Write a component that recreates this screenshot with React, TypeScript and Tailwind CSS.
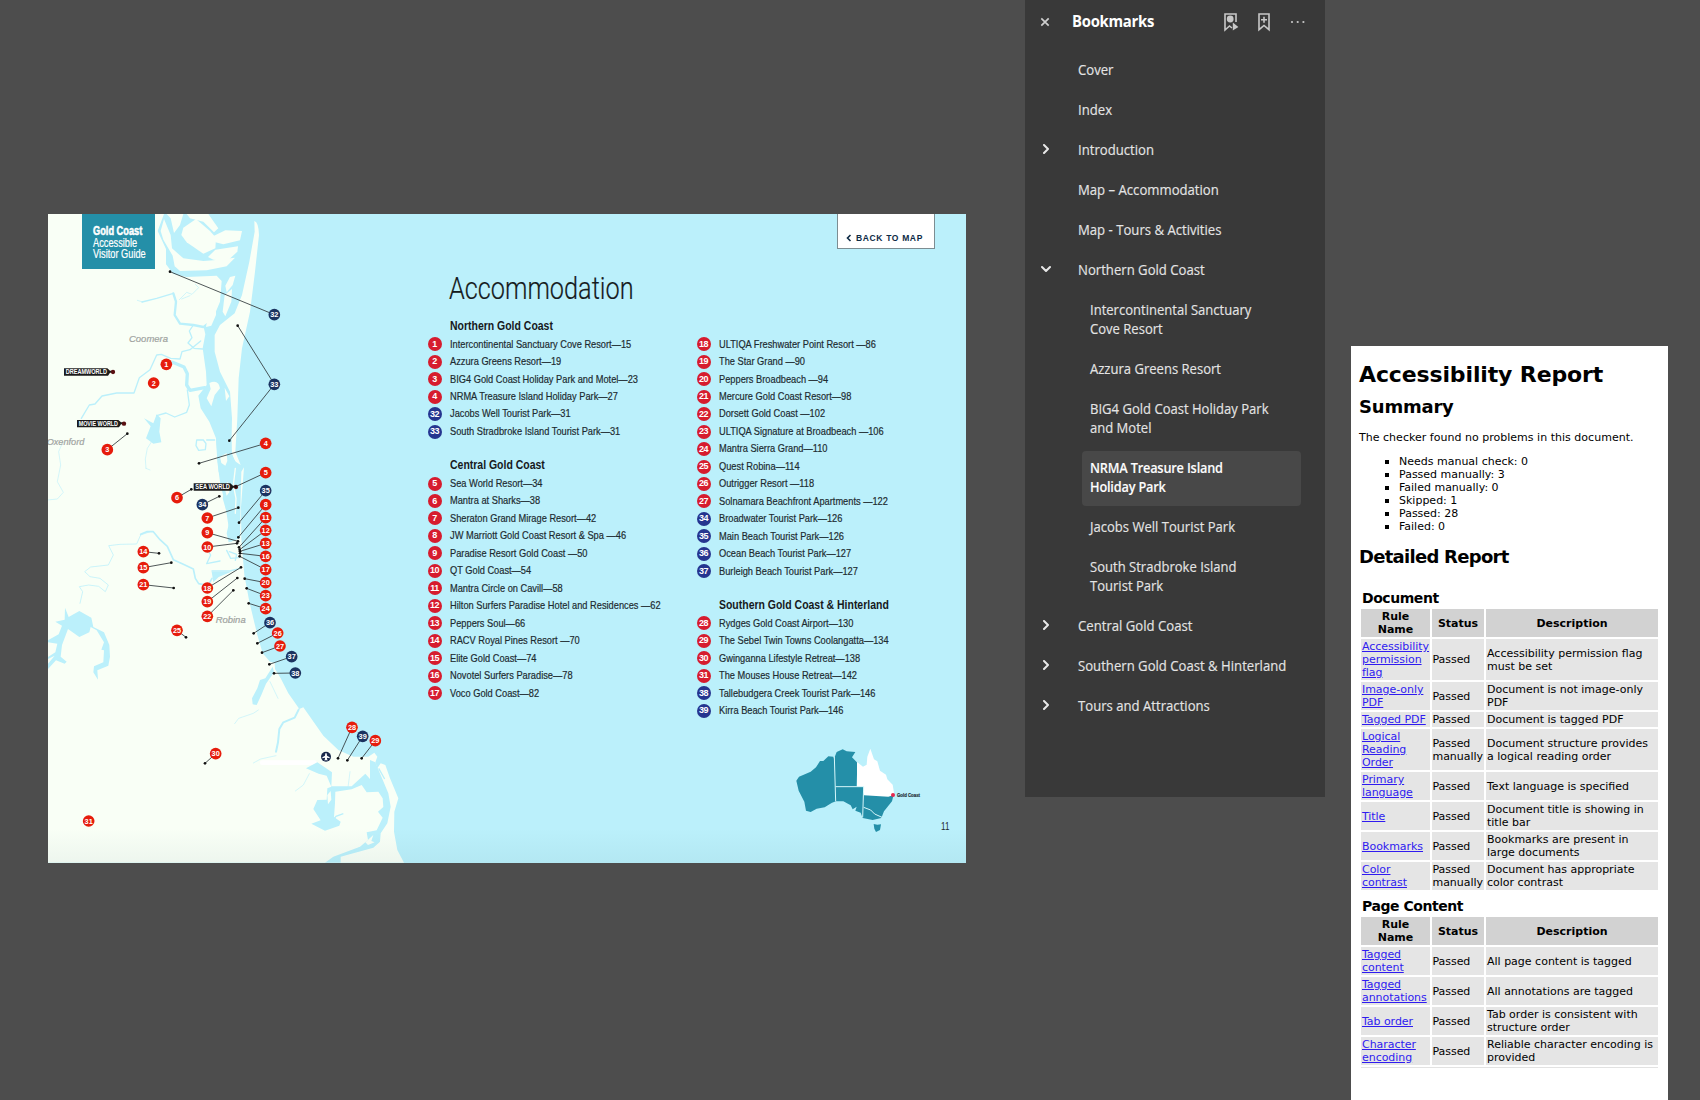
import React from "react";

type Tone = "red" | "navy";
type Item = [number, string, Tone?];

const NORTH: Item[] = [
  [1, "Intercontinental Sanctuary Cove Resort—15"],
  [2, "Azzura Greens Resort—19"],
  [3, "BIG4 Gold Coast Holiday Park and Motel—23"],
  [4, "NRMA Treasure Island Holiday Park—27"],
  [32, "Jacobs Well Tourist Park—31", "navy"],
  [33, "South Stradbroke Island Tourist Park—31", "navy"],
];
const CENTRAL_A: Item[] = [
  [5, "Sea World Resort—34"],
  [6, "Mantra at Sharks—38"],
  [7, "Sheraton Grand Mirage Resort—42"],
  [8, "JW Marriott Gold Coast Resort & Spa —46"],
  [9, "Paradise Resort Gold Coast —50"],
  [10, "QT Gold Coast—54"],
  [11, "Mantra Circle on Cavill—58"],
  [12, "Hilton Surfers Paradise Hotel and Residences —62"],
  [13, "Peppers Soul—66"],
  [14, "RACV Royal Pines Resort —70"],
  [15, "Elite Gold Coast—74"],
  [16, "Novotel Surfers Paradise—78"],
  [17, "Voco Gold Coast—82"],
];
const CENTRAL_B: Item[] = [
  [18, "ULTIQA Freshwater Point Resort —86"],
  [19, "The Star Grand —90"],
  [20, "Peppers Broadbeach —94"],
  [21, "Mercure Gold Coast Resort—98"],
  [22, "Dorsett Gold Coast —102"],
  [23, "ULTIQA Signature at Broadbeach —106"],
  [24, "Mantra Sierra Grand—110"],
  [25, "Quest Robina—114"],
  [26, "Outrigger Resort —118"],
  [27, "Solnamara Beachfront Apartments —122"],
  [34, "Broadwater Tourist Park—126", "navy"],
  [35, "Main Beach Tourist Park—126", "navy"],
  [36, "Ocean Beach Tourist Park—127", "navy"],
  [37, "Burleigh Beach Tourist Park—127", "navy"],
];
const SOUTH: Item[] = [
  [28, "Rydges Gold Coast Airport—130"],
  [29, "The Sebel Twin Towns Coolangatta—134"],
  [30, "Gwinganna Lifestyle Retreat—138"],
  [31, "The Mouses House Retreat—142"],
  [38, "Tallebudgera Creek Tourist Park—146", "navy"],
  [39, "Kirra Beach Tourist Park—146", "navy"],
];

/* label, pin x, pin y, tone, then the leader's end points */
type Pin = [number, number, number, Tone, ...number[]];
const PINS: Pin[] = [
  [32, 703, 329, "navy", 390, 200],
  [33, 703, 538, "navy", 593, 362, 568, 707],
  [1, 379, 478, "red"],
  [2, 341, 534, "red"],
  [3, 202, 734, "red", 262, 686],
  [4, 677, 715, "red", 477, 775],
  [5, 677, 803, "red", 587, 845],
  [35, 677, 857, "navy", 597, 953],
  [6, 411, 878, "red", 454, 853],
  [34, 487, 899, "navy", 538, 874],
  [7, 502, 939, "red", 595, 908],
  [8, 677, 899, "red", 595, 997],
  [9, 502, 983, "red", 594, 1009],
  [10, 502, 1026, "red", 591, 1015],
  [11, 677, 938, "red", 597, 1027],
  [12, 677, 976, "red", 599, 1034],
  [13, 677, 1015, "red", 600, 1039],
  [16, 677, 1054, "red", 600, 1045],
  [17, 677, 1094, "red", 599, 1054],
  [14, 310, 1040, "red", 357, 1045],
  [15, 310, 1088, "red", 394, 1073],
  [21, 310, 1139, "red", 401, 1149],
  [18, 502, 1149, "red", 603, 1087],
  [19, 502, 1190, "red", 592, 1119],
  [22, 502, 1234, "red", 580, 1156],
  [20, 677, 1133, "red", 614, 1121],
  [23, 677, 1172, "red", 620, 1150],
  [24, 677, 1211, "red", 626, 1195],
  [36, 690, 1253, "navy", 641, 1285],
  [26, 713, 1284, "red", 652, 1315],
  [27, 720, 1323, "red", 666, 1343],
  [37, 755, 1355, "navy", 688, 1378],
  [38, 766, 1404, "navy", 702, 1405],
  [25, 411, 1276, "red", 438, 1297],
  [28, 936, 1567, "red", 894, 1660],
  [39, 968, 1594, "navy", 922, 1666],
  [29, 1006, 1607, "red", 965, 1660],
  [30, 527, 1646, "red", 495, 1675],
  [31, 146, 1848, "red"],
];

const WATER = "#bbf0fb";
const LAND = "#f9fff6";

function Coast() {
  return (
    <g>
      {/* mainland */}
      <path
        fill={LAND}
        d="M22 27H372L353 78 378 132 378 178 400 207 440 216 530 212 545 228 540 290 520 338 490 362 496 388 488 430 498 500 500 540 475 572 482 610 508 650 528 700 532 770 540 830 556 900 565 960 572 1010 600 1000 602 880 604 800 612 787 603 905 604 1000 613 1110 628 1190 652 1290 668 1345 690 1370 704 1374 705 1392 722 1420 745 1465 778 1512 790 1507 850 1592 895 1635 940 1655 985 1655 1003 1643 1012 1655 1006 1672 1012 1690 1022 1675 1036 1680 1050 1720 1075 1780 1063 1820 1062 1880 1072 1935 1092 1973H22Z"
      />
      {/* delta islands */}
      <path fill={LAND} d="M380 27H430L420 60 402 84 392 40Z" />
      <path fill={LAND} d="M372 42L392 90 396 130 430 160 490 168 520 166 585 158 560 184 500 196 420 198 404 184 398 152 370 104 362 78Z" />
      <path fill={LAND} d="M430 68L468 42 510 78 528 98 526 130 490 146 440 112 424 90Z" />
      <path fill={LAND} d="M440 27H505L535 70 522 82 490 50 450 40Z" />
      <path fill={LAND} d="M522 92L556 76 606 78 600 106 550 118 526 112Z" />
      <path fill={LAND} d="M504 156L526 134 594 124 592 140 562 168 520 164Z" />
      <path fill={LAND} d="M556 242L570 216 586 212 578 240 560 262Z" />
      <path fill={LAND} d="M548 320L554 270 576 252 574 290 556 334Z" />
      <path fill={LAND} d="M498 366L504 330 528 304 528 330 514 362Z" />
      {/* South Stradbroke Island */}
      <path fill={LAND} d="M643 48Q656 52 657 90L645 200 630 320 606 430 596 520 592 640 586 740 602 780 584 768 574 740 576 640 570 560 540 500 524 440 524 390 540 360 584 325 606 270 628 170 644 80Z" />
      <path fill={LAND} d="M508 534Q536 522 540 550L524 570 514 604 500 580 512 552ZM554 548L568 574 558 588Z" />
      {/* the Spit */}
      <path fill={WATER} d="M528 700H574L576 750 590 776 604 782 584 800 578 850 586 905 574 925 588 960 586 1005 566 1012 560 985 568 950 548 880 556 850 536 800Z" />
      <path fill={LAND} d="M540 756L560 744 562 768 556 782 544 774ZM552 842L564 830 568 862 560 872Z" />
      <g fill="none" stroke={WATER} strokeLinecap="round" strokeLinejoin="round">
        {/* Coomera River */}
        <path strokeWidth="7" d="M400 265L408 290 404 330 420 356 460 360 490 366" />
        <path strokeWidth="4" d="M306 291L350 280 400 265M460 360L448 378 456 398 444 414 462 430 488 432" />
        <path strokeWidth="2" d="M292 286L308 291M418 284L440 262 456 268 476 248 466 238M425 282L450 272" />
        <path strokeWidth="4" d="M124 640L148 600 165 597 186 573 230 564 282 564 298 518 330 494 350 450 364 448 392 460 420 462 426 440 450 434 482 408" />
        <path strokeWidth="10" d="M398 472L432 486 442 506 440 540 450 556 494 548" />
        <path strokeWidth="4" d="M442 555L448 600 440 622 404 636 378 624 350 632M470 705H490L498 716 496 734 476 736 468 722ZM500 705H524" />
        <path strokeWidth="3" d="M22 885L52 882 70 862 52 830 62 780 56 740 68 712M318 790L316 762 322 730 336 708M318 790L330 795" opacity=".6" />
        {/* Nerang River */}
        <path strokeWidth="3" opacity=".75" d="M120 1195L128 1160 118 1145 146 1140 176 1144 196 1160 205 1140 180 1120 150 1115 134 1100 152 1086 205 1080 220 1050 206 1022 240 1018 290 1017 302 990 330 980" />
        <path strokeWidth="5" d="M302 988L320 980 340 980 360 1004 382 1024 400 1064 430 1078 460 1092 466 1120 476 1136 504 1142 516 1120" />
        <path strokeWidth="4" d="M500 1030L512 1050 500 1076 540 1068M560 1036L572 1060 596 1058M568 1040L590 1048 586 1066M516 1098H570L600 1090" />
        <path strokeWidth="4" d="M586 790L580 840 588 880 586 925" stroke={LAND} />
        {/* southern creeks */}
        <path strokeWidth="3" opacity=".6" d="M584 1556L596 1540 640 1525 655 1515M690 1430L714 1480M640 1674L662 1662 708 1652M766 1758L790 1740 808 1706M930 1700L924 1748" />
        <path strokeWidth="6" d="M776 1514L764 1538 730 1552 718 1572 714 1612 708 1640" />
      </g>
      <path fill={WATER} d="M698 1385L702 1402 678 1436 664 1470 650 1500 638 1498 636 1480 652 1450 660 1425 676 1420Z" />
      <path fill={WATER} d="M515 1100H574L536 1116 520 1132Z" />
      <path fill={WATER} d="M312 640L340 655 350 628 362 640 358 680 364 712 340 716 318 700 332 664Z" />
      {/* Hinze Dam */}
      <path fill={WATER} d="M75 1208L86 1236 118 1218 154 1238 160 1266 192 1282 208 1320 210 1355 205 1382 172 1396 174 1424 160 1402 162 1384 190 1372 192 1336 184 1334 192 1312 170 1276 152 1266 148 1282 118 1296 84 1272 66 1320 62 1355 80 1370 74 1376 48 1366 24 1392 24 1376 44 1352 24 1362 24 1356 46 1342 52 1316 24 1312 24 1306 56 1288 66 1262 46 1250 74 1244Z" />
      <rect x="660" y="1666" width="170" height="14" rx="6" fill="#fff" />
      {/* Tweed River */}
      <path fill={WATER} d="M990 1665L1006 1672 1022 1710 1045 1765 1052 1805 1042 1855 1022 1885 1020 1910 1000 1928 940 1945 902 1955V1973H855L880 1955 960 1925 984 1905 980 1882 1010 1876 1028 1838 1014 1820 1030 1806 1028 1780 1015 1760 980 1762 965 1740 935 1753 886 1760 885 1795 882 1836 902 1850 898 1862 855 1877 814 1856 842 1846 820 1812 832 1785 860 1784 862 1750 874 1745 860 1712 836 1706 798 1690 832 1672 876 1702 874 1744 935 1744 976 1706 990 1722Z" />
      <path fill={LAND} d="M976 1912L1000 1890 994 1908 1004 1912 984 1920ZM862 1770L872 1758 874 1784 864 1798Z" />
      <path fill="none" stroke={WATER} strokeWidth="4" d="M876 1850L888 1834 910 1826M1016 1690L1034 1722" />
    </g>
  );
}

function Tag({ x, y, w, label }: { x: number; y: number; w: number; label: string }) {
  return (
    <g>
      <path fill="#1c1c1c" d={`M${x} ${y - 11}H${x + w - 8}L${x + w} ${y - 4}H${x + w + 10}V${y + 2}H${x + w}L${x + w - 6} ${y + 11}H${x}Z`} />
      <circle cx={x + w + 9} cy={y} r="6.5" fill="#5a1012" />
      <text x={x + 5} y={y + 6.5} fontSize="19" fontWeight="700" fill="#fff" textLength={w - 14} lengthAdjust="spacingAndGlyphs">{label}</text>
    </g>
  );
}

function MapArt() {
  return (
    <svg className="absolute inset-0" width="918" height="649" viewBox="24 27 2754 1947" fontFamily="'Liberation Sans', Arial, sans-serif">
      <defs>
        <linearGradient id="foot" x1="0" x2="0" y1="0" y2="1">
          <stop offset="0" stopColor="#4a7a80" stopOpacity="0" />
          <stop offset="1" stopColor="#4a7a80" stopOpacity=".07" />
        </linearGradient>
      </defs>
      <rect x="22" y="27" width="2760" height="1950" fill={WATER} />
      <Coast />
      <rect x="22" y="1870" width="2760" height="106" fill="url(#foot)" />
      <g fontStyle="italic" fill="#a0a3a0" stroke="#a0a3a0" strokeWidth=".6" fontSize="28">
        <text x="267" y="410" textLength="117" lengthAdjust="spacingAndGlyphs">Coomera</text>
        <text x="20" y="721" textLength="113" lengthAdjust="spacingAndGlyphs">Oxenford</text>
        <text x="527" y="1254" textLength="90" lengthAdjust="spacingAndGlyphs">Robina</text>
      </g>
      <Tag x={72} y={501} w={138} label="DREAMWORLD" />
      <Tag x={111} y={656} w={132} label="MOVIE WORLD" />
      <Tag x={461} y={846} w={118} label="SEA WORLD" />
      {PINS.map(([n, x, y, , ...ends]) =>
        [0, 2].map((i) =>
          ends[i] === undefined ? null : (
            <g key={`${n}-${i}`}>
              <line x1={x} y1={y} x2={ends[i]} y2={ends[i + 1]} stroke="#333b3d" strokeWidth="2.6" />
              <circle cx={ends[i]} cy={ends[i + 1]} r="4" fill="#111" />
            </g>
          ),
        ),
      )}
      {PINS.map(([n, x, y, tone]) => (
        <g key={n}>
          <circle cx={x} cy={y} r="17.5" fill={tone === "red" ? "#e61c0c" : "#1b3360"} />
          <text x={x} y={y + 7.5} textAnchor="middle" fontSize="22" fontWeight="700" fill="#fff">{n}</text>
        </g>
      ))}
      <circle cx="858" cy="1655" r="15" fill="#1b2a4d" />
      <path fill="#fff" d="M856 1645h4l1 7 8 5v3l-8-2v5l3 3h-12l3-3v-5l-8 2v-3l8-5Z" />
      {/* Australia */}
      <g transform="translate(1920 1365)">
        <path fill="#248fa8" d="M462 296L460 290 445 289 430 303 420 303 408 322 392 335 357 350 349 362 356 392 373 425 378 452 392 456 410 446 434 442 456 428 468 424 490 424 512 436 518 448 530 440 526 452 542 458 548 474 578 480 604 474 612 454 636 424 642 400 552 404 550 380 530 378 532 308 516 292 526 276 500 274 488 268 470 276Z" />
        <path fill="#fff" d="M531 306L549 320 560 314 562 290 571 266 582 298 592 304 600 332 618 344 622 358 638 374 643 404 625 410 552 406V380H531Z" />
        <path fill="none" stroke="#d8f7fb" strokeWidth="3" d="M463 290L467 424M467 380H551L548 472M551 442L572 450 584 462 606 472" />
        <path fill="#248fa8" d="M581 492L592 494 603 493 600 510 588 516 583 506Z" />
        <circle cx="639" cy="405" r="6" fill="#e8274f" />
        <text x="651" y="410" fontSize="13.5" fontWeight="700" fill="#1c2b33" stroke="#1c2b33" strokeWidth=".5" textLength="69" lengthAdjust="spacingAndGlyphs">Gold Coast</text>
      </g>
    </svg>
  );
}

function Legend({ items }: { items: Item[] }) {
  return (
    <ul>
      {items.map(([n, label, tone]) => (
        <li key={n} className="flex h-[17.47px] items-center gap-[8px]">
          <span className={`flex size-[14px] shrink-0 items-center justify-center rounded-full text-[9px] leading-none font-bold tracking-[-0.4px] text-white ${tone === "navy" ? "bg-[#25358f]" : "bg-[#d61c2e]"}`}>{n}</span>
          <span className="origin-left scale-x-[0.82] text-[11.3px] leading-none whitespace-nowrap text-[#1d2b30] [-webkit-text-stroke:0.2px_#1d2b30]">{label}</span>
        </li>
      ))}
    </ul>
  );
}

function LegendHeading({ children }: { children: React.ReactNode }) {
  return (
    <h2 className="ml-[22px] h-[20px] origin-left scale-x-[0.805] text-[13px] leading-[20px] font-bold whitespace-nowrap text-[#16191c]">{children}</h2>
  );
}

function GuidePage() {
  return (
    <section className="relative mt-[214px] ml-[48px] h-[649px] w-[918px] shrink-0 overflow-hidden font-['Liberation_Sans',Arial,sans-serif]">
      <MapArt />
      <div className="relative flex h-full flex-col">
        <header className="flex items-start justify-between pr-[31px] pl-[33.5px]">
          <div className="h-[55px] w-[73px] bg-[#248fa8] pt-[12px] pl-[11.5px] text-[12px] leading-[11.5px] text-white">
            <p className="origin-left scale-x-[0.77] font-bold whitespace-nowrap [-webkit-text-stroke:0.5px_white]">Gold Coast</p>
            <p className="origin-left scale-x-[0.77] whitespace-nowrap [-webkit-text-stroke:0.2px_white]">Accessible</p>
            <p className="origin-left scale-x-[0.77] whitespace-nowrap [-webkit-text-stroke:0.2px_white]">Visitor Guide</p>
          </div>
          <div className="flex h-[35px] w-[98px] items-center border border-t-0 border-[#7d8d92] bg-white pt-[14px] pl-[8px] text-[8.5px] font-bold tracking-[0.65px] whitespace-nowrap text-[#0d2a45]">
            <svg width="6" height="8" viewBox="0 0 6 8" className="mr-[4px]"><path d="M4.5 1L1.5 4l3 3" fill="none" stroke="#0d2a45" strokeWidth="1.6" /></svg>
            BACK TO MAP
          </div>
        </header>
        <h1 className="-mt-px ml-[401px] h-[42px] origin-left scale-x-[0.79] font-['Roboto',sans-serif] text-[32px] leading-[40px] font-light whitespace-nowrap text-[#151a1c] [-webkit-text-stroke:0.2px_#151a1c]">Accommodation</h1>
        <div className="ml-[379.5px] flex">
          <div className="w-[269px] pt-[5.5px]">
            <LegendHeading>Northern Gold Coast</LegendHeading>
            <Legend items={NORTH} />
            <div className="h-[14.5px]" />
            <LegendHeading>Central Gold Coast</LegendHeading>
            <Legend items={CENTRAL_A} />
          </div>
          <div className="pt-[25.5px]">
            <Legend items={CENTRAL_B} />
            <div className="h-[14.5px]" />
            <LegendHeading>Southern Gold Coast &amp; Hinterland</LegendHeading>
            <Legend items={SOUTH} />
          </div>
        </div>
        <span className="mt-auto mr-[17px] mb-[30px] origin-right scale-x-[0.8] self-end text-[10px] leading-[12px] text-[#1d2b30]">11</span>
      </div>
    </section>
  );
}

type Node = { lines: string[]; caret?: "right" | "down"; child?: boolean; active?: boolean };
const NODES: Node[] = [
  { lines: ["Cover"] },
  { lines: ["Index"] },
  { lines: ["Introduction"], caret: "right" },
  { lines: ["Map – Accommodation"] },
  { lines: ["Map - Tours & Activities"] },
  { lines: ["Northern Gold Coast"], caret: "down" },
  { lines: ["Intercontinental Sanctuary", "Cove Resort"], child: true },
  { lines: ["Azzura Greens Resort"], child: true },
  { lines: ["BIG4 Gold Coast Holiday Park", "and Motel"], child: true },
  { lines: ["NRMA Treasure Island", "Holiday Park"], child: true, active: true },
  { lines: ["Jacobs Well Tourist Park"], child: true },
  { lines: ["South Stradbroke Island", "Tourist Park"], child: true },
  { lines: ["Central Gold Coast"], caret: "right" },
  { lines: ["Southern Gold Coast & Hinterland"], caret: "right" },
  { lines: ["Tours and Attractions"], caret: "right" },
];

function Bookmarks() {
  return (
    <aside className="ml-[59px] h-[797px] w-[300px] shrink-0 bg-[#393939] font-['Open_Sans',sans-serif] text-[#e4e4e4]">
      <header className="flex h-[50px] items-center pb-[7px] pl-[15px]">
        <svg width="10" height="10" viewBox="0 0 10 10" className="mt-px"><path d="M1.3 1.3l7.4 7.4M8.7 1.3L1.3 8.7" stroke="#cfcfcf" strokeWidth="1.7" /></svg>
        <h2 className="-mt-px ml-[22px] w-[151px] origin-left scale-x-[0.93] text-[16px] leading-[20px] font-bold tracking-[-0.3px] text-white">Bookmarks</h2>
        <svg width="16" height="20" viewBox="0 0 16 20" fill="none" stroke="#c8c8c8" strokeWidth="1.6">
          <path d="M13 10V2H2v16l4.5-4 2.5 2" />
          <circle cx="7.2" cy="7" r="3.4" fill="#c8c8c8" stroke="none" />
          <path d="M9.8 10.5v8l5.6-3.6z" fill="#c8c8c8" stroke="none" />
        </svg>
        <svg width="14" height="20" viewBox="0 0 14 20" className="ml-[18px]" fill="none" stroke="#c8c8c8" strokeWidth="1.6">
          <path d="M2 2h10v15.7l-5-4.2-5 4.2zM7 4.8v6M4 7.8h6" />
        </svg>
        <svg width="16" height="4" viewBox="0 0 16 4" className="ml-[18.5px]" fill="#c8c8c8">
          <circle cx="2" cy="2" r="1.1" /><circle cx="7.7" cy="2" r="1.1" /><circle cx="13.4" cy="2" r="1.1" />
        </svg>
      </header>
      <ul className="text-[14px] leading-[19px] [-webkit-text-stroke:0.15px_#e4e4e4]">
        {NODES.map((n) => (
          <li key={n.lines[0]} className="flex pl-[15px]">
            <span className="mt-[14px] flex h-[10px] w-[12px] items-center justify-center">
              {n.caret && (
                <svg width="10" height="10" viewBox="0 0 10 10" className={n.caret === "down" ? "rotate-90" : ""}>
                  <path d="M3 1l4 4-4 4" fill="none" stroke="#e8e8e8" strokeWidth="2" strokeLinecap="round" strokeLinejoin="round" />
                </svg>
              )}
            </span>
            {n.child ? (
              <span className={`mt-[3px] mb-px ml-[30px] w-[219px] rounded-[4px] pt-[7px] pb-[10px] pl-[8px] whitespace-nowrap ${n.active ? "bg-[#484848] text-white" : ""}`}>
                {n.lines.map((l) => (
                  <span key={l} className={`block origin-left ${n.active ? "scale-x-[0.91] font-semibold tracking-[-0.2px]" : "scale-x-[0.932]"}`}>{l}</span>
                ))}
              </span>
            ) : (
              <span className="ml-[26px] block origin-left scale-x-[0.938] pt-[10px] pb-[11px] whitespace-nowrap">{n.lines[0]}</span>
            )}
          </li>
        ))}
      </ul>
    </aside>
  );
}

type Rule = [string[], string[], string[]];
const DOC: Rule[] = [
  [["Accessibility", "permission", "flag"], ["Passed"], ["Accessibility permission flag", "must be set"]],
  [["Image-only", "PDF"], ["Passed"], ["Document is not image-only", "PDF"]],
  [["Tagged PDF"], ["Passed"], ["Document is tagged PDF"]],
  [["Logical", "Reading", "Order"], ["Passed", "manually"], ["Document structure provides", "a logical reading order"]],
  [["Primary", "language"], ["Passed"], ["Text language is specified"]],
  [["Title"], ["Passed"], ["Document title is showing in", "title bar"]],
  [["Bookmarks"], ["Passed"], ["Bookmarks are present in", "large documents"]],
  [["Color", "contrast"], ["Passed", "manually"], ["Document has appropriate", "color contrast"]],
];
const PAGE: Rule[] = [
  [["Tagged", "content"], ["Passed"], ["All page content is tagged"]],
  [["Tagged", "annotations"], ["Passed"], ["All annotations are tagged"]],
  [["Tab order"], ["Passed"], ["Tab order is consistent with", "structure order"]],
  [["Character", "encoding"], ["Passed"], ["Reliable character encoding is", "provided"]],
];

function Lines({ text, link }: { text: string[]; link?: boolean }) {
  return (
    <>
      {text.map((t) => (
        <span key={t} className={link ? "block text-[#2f1bf0] underline" : "block"}>{t}</span>
      ))}
    </>
  );
}

function RuleTable({ title, rules }: { title: string; rules: Rule[] }) {
  return (
    <div className="whitespace-nowrap">
      <h3 className="pl-px text-[14px] leading-[20px] font-bold tracking-[-0.45px]">{title}</h3>
      <div className="mt-px grid grid-cols-[69px_52px_172px] gap-[2px]">
        {[["Rule", "Name"], ["Status"], ["Description"]].map((h) => (
          <div key={h[0]} className="flex h-[28px] flex-col justify-center bg-[#d2d2d2] text-center font-bold"><Lines text={h} /></div>
        ))}
        {rules.map(([a, b, c]) => (
          <React.Fragment key={a.join()}>
            <div className="flex flex-col items-start justify-center bg-[#e5e5e5] p-px tracking-[-0.05px]"><Lines text={a} link /></div>
            <div className="flex flex-col justify-center bg-[#e5e5e5] p-px pl-[0.5px] tracking-[-0.05px]"><Lines text={b} /></div>
            <div className="flex flex-col justify-center bg-[#e5e5e5] p-px"><Lines text={c} /></div>
          </React.Fragment>
        ))}
      </div>
    </div>
  );
}

function Report() {
  return (
    <section className="mt-[346px] ml-[26px] h-[754px] w-[317px] shrink-0 bg-white pl-[8px] font-['DejaVu_Sans',Verdana,sans-serif] text-[11px] leading-[13px] text-black">
      <h1 className="pt-[15px] text-[22px] leading-[28px] font-bold tracking-[-0.13px]">Accessibility Report</h1>
      <h2 className="mt-[5px] text-[18px] leading-[26px] font-bold tracking-[-0.2px]">Summary</h2>
      <p className="mt-[11px] tracking-[0.02px]">The checker found no problems in this document.</p>
      <ul className="mt-[11px] pl-[40px]">
        {["Needs manual check: 0", "Passed manually: 3", "Failed manually: 0", "Skipped: 1", "Passed: 28", "Failed: 0"].map((t) => (
          <li key={t} className="relative"><span className="absolute top-[5px] -left-[14px] size-[4px] bg-black" />{t}</li>
        ))}
      </ul>
      <h2 className="mt-[11px] text-[18px] leading-[26px] font-bold tracking-[-0.72px]">Detailed Report</h2>
      <div className="mt-[18px] ml-[2px]">
        <RuleTable title="Document" rules={DOC} />
        <div className="h-[6px]" />
        <RuleTable title="Page Content" rules={PAGE} />
        <div className="mt-[2px] h-px w-[297px] bg-[#e2e2e2]" />
      </div>
    </section>
  );
}

export default function App() {
  return (
    <main className="flex h-[1100px] w-[1700px] items-start overflow-hidden bg-[#4d4d4d]">
      <GuidePage />
      <Bookmarks />
      <Report />
    </main>
  );
}
